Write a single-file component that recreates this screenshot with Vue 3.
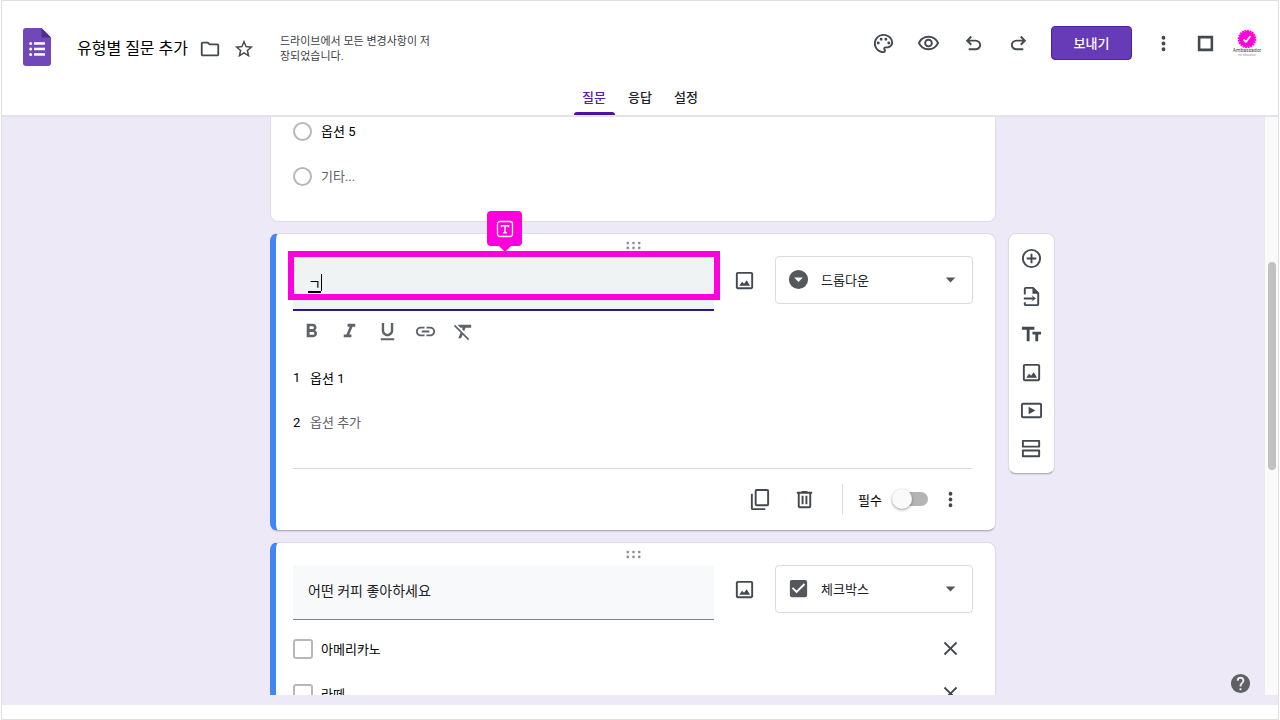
<template>
  <div class="page">
    <div class="app">
      <header class="header">
        <div class="header-top">
          <div class="doc-info">
            <a href="#" class="logo" aria-label="Forms">
              <svg width="28" height="38" viewBox="0 0 28 38">
                <path d="M3 0h15.500l9.500 9.500V35a3 3 0 0 1-3 3H3a3 3 0 0 1-3-3V3a3 3 0 0 1 3-3z" fill="#7248b9" />
                <path d="M18.500 0L28 9.500h-9.500z" fill="#4e2f86" />
                <g fill="#fff">
                  <circle cx="7.700" cy="15.500" r="1.500" />
                  <circle cx="7.700" cy="21" r="1.500" />
                  <circle cx="7.700" cy="26.500" r="1.500" />
                  <rect x="11" y="14.200" width="11" height="2.500" />
                  <rect x="11" y="19.700" width="11" height="2.500" />
                  <rect x="11" y="25.200" width="11" height="2.500" />
                </g>
              </svg>
            </a>
            <h1 class="doc-title">유형별 질문 추가</h1>
            <button class="icon-btn doc-btn" aria-label="폴더"><Icon name="folder" /></button>
            <button class="icon-btn doc-btn" aria-label="별표"><Icon name="star" /></button>
            <p class="save-status">드라이브에서 모든 변경사항이 저장되었습니다.</p>
          </div>

          <div class="header-actions">
            <button v-for="a in headerActions" :key="a.icon" class="icon-btn action" :aria-label="a.label">
              <Icon :name="a.icon" />
            </button>
            <button class="send-btn">보내기</button>
            <button class="icon-btn narrow" aria-label="더보기"><Icon name="more" /></button>
            <button class="icon-btn narrow" aria-label="앱"><Icon name="square" /></button>
            <button class="icon-btn narrow" aria-label="계정">
              <svg width="30" height="30" viewBox="0 0 30 30">
                <circle cx="15" cy="11" r="8" fill="#ff00dc" />
                <circle cx="15" cy="11" r="8.300" fill="none" stroke="#ff00dc" stroke-width="2" stroke-dasharray="1.800 0.800" />
                <path d="M11.500 11.500l2.500 2.500 4.500-6" fill="none" stroke="#fff" stroke-width="1.800" />
                <text x="15" y="23.500" class="avatar-name">Ambassador</text>
                <text x="15" y="27.500" class="avatar-sub">for education</text>
              </svg>
            </button>
          </div>
        </div>

        <nav class="tabs">
          <a
            v-for="tab in tabs"
            :key="tab"
            href="#"
            class="tab"
            :class="{ active: tab === activeTab }"
            @click.prevent="activeTab = tab"
          >{{ tab }}</a>
        </nav>
      </header>

      <div class="body">
        <main class="canvas">
          <!-- Previous question -->
          <section class="card card-prev">
            <label class="choice">
              <input type="radio" class="radio" disabled />
              <span>옵션 5</span>
            </label>
            <label class="choice muted">
              <input type="radio" class="radio" disabled />
              <span>기타...</span>
            </label>
          </section>

          <!-- Question being edited -->
          <section class="card selected card-active">
            <div class="handle"><Icon name="drag" /></div>
            <div class="question-row">
              <div class="question-field focused">
                <input v-model="question" type="text" class="question-input" aria-label="질문" />
                <span class="caret"></span>
                <div class="highlight">
                  <span class="highlight-tag">
                    <svg width="18" height="18" viewBox="0 0 18 18" fill="none" stroke="#fff">
                      <rect x="1.500" y="1.500" width="15" height="15" rx="2.500" stroke-width="1.300" />
                      <path d="M5.500 7.200V5.800h7v1.400M9 5.800v7M7.300 12.800h3.400" stroke-width="1.500" />
                    </svg>
                  </span>
                </div>
              </div>
              <button class="icon-btn image-btn" aria-label="이미지 추가"><Icon name="image" /></button>
              <div class="type-select">
                <Icon name="dropdown" class="type-icon" />
                <select aria-label="질문 유형">
                  <option>드롭다운</option>
                  <option>체크박스</option>
                </select>
                <Icon name="arrow" class="type-arrow" />
              </div>
            </div>

            <div class="format-bar">
              <button v-for="f in formats" :key="f.icon" class="icon-btn format-btn" :aria-label="f.label">
                <Icon :name="f.icon" />
              </button>
            </div>

            <ol class="options">
              <li class="option">
                <span class="option-index">1</span>
                <input type="text" class="option-input" value="옵션 1" aria-label="옵션 1" />
              </li>
              <li class="option">
                <span class="option-index">2</span>
                <input type="text" class="option-input" placeholder="옵션 추가" aria-label="옵션 추가" />
              </li>
            </ol>

            <footer class="card-footer">
              <button class="icon-btn footer-btn" aria-label="복사"><Icon name="copy" /></button>
              <button class="icon-btn footer-btn" aria-label="삭제"><Icon name="trash" /></button>
              <label class="required">
                <span>필수</span>
                <input v-model="required" type="checkbox" role="switch" class="switch" />
              </label>
              <button class="icon-btn footer-btn" aria-label="옵션 더보기"><Icon name="more" /></button>
            </footer>
          </section>

          <aside class="side-toolbar">
            <button v-for="t in tools" :key="t.icon" class="icon-btn tool" :aria-label="t.label">
              <Icon :name="t.icon" />
            </button>
          </aside>

          <!-- Next question -->
          <section class="card selected">
            <div class="handle"><Icon name="drag" /></div>
            <div class="question-row">
              <div class="question-field">
                <input type="text" class="question-input" value="어떤 커피 좋아하세요" aria-label="질문" />
              </div>
              <button class="icon-btn image-btn" aria-label="이미지 추가"><Icon name="image" /></button>
              <div class="type-select">
                <Icon name="checkbox" class="type-icon" />
                <select aria-label="질문 유형">
                  <option>체크박스</option>
                  <option>드롭다운</option>
                </select>
                <Icon name="arrow" class="type-arrow" />
              </div>
            </div>
            <ul class="options checks">
              <li v-for="drink in drinks" :key="drink" class="option">
                <input type="checkbox" class="check" :aria-label="drink" />
                <input type="text" class="option-input" :value="drink" :aria-label="drink" />
                <button class="icon-btn footer-btn" aria-label="삭제"><Icon name="close" /></button>
              </li>
            </ul>
          </section>
        </main>

        <div class="scrollbar"><div class="thumb"></div></div>
        <button class="help" aria-label="도움말"><Icon name="help" /></button>
      </div>
    </div>
  </div>
</template>

<script setup>
import { h, ref } from 'vue'

const paths = {
  folder: 'M9.170 6l2 2H20v10H4V6h5.170M10 4H4c-1.100 0-2 .9-2 2v12c0 1.100.9 2 2 2h16c1.100 0 2-.9 2-2V8c0-1.100-.9-2-2-2h-8l-2-2z',
  star: 'M22 9.240l-7.190-.62L12 2 9.190 8.630 2 9.240l5.460 4.730L5.820 21 12 17.270 18.180 21l-1.630-7.030L22 9.240zM12 15.400l-3.760 2.270 1-4.280-3.320-2.880 4.380-.38L12 6.100l1.710 4.040 4.380.38-3.320 2.880 1 4.280L12 15.400z',
  palette: 'M12 22C6.490 22 2 17.510 2 12S6.490 2 12 2s10 4.040 10 9c0 3.310-2.690 6-6 6h-1.770c-.28 0-.5.22-.5.5 0 .12.05.23.13.33.41.47.64 1.060.64 1.670A2.500 2.500 0 0 1 12 22zm0-18c-4.410 0-8 3.590-8 8s3.590 8 8 8c.28 0 .5-.22.5-.5a.54.54 0 0 0-.14-.35c-.41-.46-.63-1.050-.63-1.650a2.500 2.500 0 0 1 2.500-2.500H16c2.210 0 4-1.790 4-4 0-3.860-3.590-7-8-7zM6.500 10a1.500 1.500 0 1 0 0 3 1.500 1.500 0 0 0 0-3zM9.500 6a1.500 1.500 0 1 0 0 3 1.500 1.500 0 0 0 0-3zM14.500 6a1.500 1.500 0 1 0 0 3 1.500 1.500 0 0 0 0-3zM17.500 10a1.500 1.500 0 1 0 0 3 1.500 1.500 0 0 0 0-3z',
  eye: 'M12 6a9.770 9.770 0 0 1 8.820 5.500 9.760 9.760 0 0 1-17.640 0A9.770 9.770 0 0 1 12 6m0-2C7 4 2.730 7.110 1 11.500 2.730 15.890 7 19 12 19s9.270-3.110 11-7.500C21.270 7.110 17 4 12 4zm0 5a2.500 2.500 0 0 1 0 5 2.500 2.500 0 0 1 0-5m0-2a4.500 4.500 0 1 0 0 9 4.500 4.500 0 0 0 0-9z',
  undo: 'M7 19v-2h7.100q1.570 0 2.740-1Q18 15 18 13.500T16.840 11Q15.670 10 14.100 10H7.800l2.600 2.600L9 14 4 9l5-5 1.400 1.400L7.800 8h6.300q2.420 0 4.160 1.570Q20 11.150 20 13.500q0 2.350-1.740 3.920Q16.520 19 14.100 19z',
  redo: 'M17 19v-2H9.900q-1.570 0-2.740-1Q6 15 6 13.500T7.160 11Q8.330 10 9.900 10h6.300l-2.600 2.600L15 14l5-5-5-5-1.400 1.400L16.200 8H9.900q-2.420 0-4.160 1.570Q4 11.150 4 13.500q0 2.350 1.740 3.920Q7.480 19 9.900 19z',
  more: 'M12 8a2 2 0 1 0 0-4 2 2 0 0 0 0 4zm0 2a2 2 0 1 0 0 4 2 2 0 0 0 0-4zm0 6a2 2 0 1 0 0 4 2 2 0 0 0 0-4z',
  square: 'M4 4h16v16H4zM6.700 6.700v10.600h10.600V6.700z',
  drag: 'M6 8.100a1.400 1.400 0 1 0 0 2.800 1.400 1.400 0 0 0 0-2.800zM12 8.100a1.400 1.400 0 1 0 0 2.800 1.400 1.400 0 0 0 0-2.800zM18 8.100a1.400 1.400 0 1 0 0 2.800 1.400 1.400 0 0 0 0-2.800zM6 13.100a1.400 1.400 0 1 0 0 2.800 1.400 1.400 0 0 0 0-2.800zM12 13.100a1.400 1.400 0 1 0 0 2.800 1.400 1.400 0 0 0 0-2.800zM18 13.100a1.400 1.400 0 1 0 0 2.800 1.400 1.400 0 0 0 0-2.800z',
  image: 'M19 5v14H5V5h14m0-2H5c-1.100 0-2 .9-2 2v14c0 1.100.9 2 2 2h14c1.100 0 2-.9 2-2V5c0-1.100-.9-2-2-2zM6.500 17.500l3-4.300 2 2.300 2.800-3.700 3.500 5.700z',
  dropdown: 'M12 2a10 10 0 1 0 0 20 10 10 0 0 0 0-20zm0 12.500l-4.500-4.500h9z',
  checkbox: 'M19 3H5a2 2 0 0 0-2 2v14c0 1.100.9 2 2 2h14a2 2 0 0 0 2-2V5a2 2 0 0 0-2-2zm-9 14l-5-5 1.410-1.410L10 14.170l7.590-7.590L19 8l-9 9z',
  arrow: 'M7 10l5 5 5-5z',
  bold: 'M15.600 10.790c.97-.67 1.650-1.770 1.650-2.790 0-2.260-1.750-4-4-4H7v14h7.040c2.090 0 3.710-1.700 3.710-3.790 0-1.520-.86-2.820-2.150-3.420zM10 6.500h3c.83 0 1.500.67 1.500 1.500s-.67 1.500-1.500 1.500h-3v-3zm3.500 9H10v-3h3.500c.83 0 1.500.67 1.500 1.500s-.67 1.500-1.500 1.500z',
  italic: 'M10 4v3h2.210l-3.420 8H6v3h8v-3h-2.210l3.420-8H18V4z',
  underline: 'M12 17c3.310 0 6-2.690 6-6V3h-2.500v8c0 1.930-1.570 3.500-3.500 3.500S8.500 12.930 8.500 11V3H6v8c0 3.310 2.690 6 6 6zm-7 2v2h14v-2H5z',
  link: 'M3.900 12c0-1.710 1.390-3.100 3.100-3.100h4V7H7c-2.760 0-5 2.240-5 5s2.240 5 5 5h4v-1.900H7c-1.710 0-3.100-1.390-3.100-3.100zM8 13h8v-2H8v2zm9-6h-4v1.900h4c1.710 0 3.100 1.390 3.100 3.100s-1.390 3.100-3.100 3.100h-4V17h4c2.760 0 5-2.240 5-5s-2.240-5-5-5z',
  clear: 'M3.270 5L2 6.270l6.970 6.970L6.500 19h3l1.570-3.660L16.730 21 18 19.730 3.550 5.270 3.270 5zM6 5v.18L8.820 8h2.400l-.72 1.680 2.100 2.100L14.210 8H20V5H6z',
  copy: 'M20 1H9a2 2 0 0 0-2 2v14c0 1.100.9 2 2 2h11a2 2 0 0 0 2-2V3a2 2 0 0 0-2-2zm0 16H9V3h11v14zM3 6h2v15h13v2H5a2 2 0 0 1-2-2V6z',
  trash: 'M9 3v1H4v2h1v13c0 1.100.9 2 2 2h10a2 2 0 0 0 2-2V6h1V4h-5V3H9zM7 6h10v13H7V6zm2 2v9h2V8H9zm4 0v9h2V8h-2z',
  add: 'M13 7h-2v4H7v2h4v4h2v-4h4v-2h-4V7zm-1-5a10 10 0 1 0 0 20 10 10 0 0 0 0-20zm0 18a8 8 0 1 1 0-16 8 8 0 0 1 0 16z',
  importFile: 'M14 2H6a2 2 0 0 0-2 2v6h2V4h7v5h5v11H6v-2H4v2c0 1.100.9 2 2 2h12a2 2 0 0 0 2-2V8l-6-6zM12 10.500l1.500 2.500H4v2h9.500L12 17.500l4.500-3.500z',
  text: 'M2 4v3h5v12h3V7h5V4H2zm20 5h-9v3h3v7h3v-7h3V9z',
  video: 'M21 4H3a2 2 0 0 0-2 2v12c0 1.100.9 2 2 2h18a2 2 0 0 0 2-2V6a2 2 0 0 0-2-2zm0 14H3V6h18v12zM9 8l7 4-7 4z',
  section: 'M20 3H3a1 1 0 0 0-1 1v6a1 1 0 0 0 1 1h17a1 1 0 0 0 1-1V4a1 1 0 0 0-1-1zm-1 6H4V5h15v4zM20 13H3a1 1 0 0 0-1 1v6a1 1 0 0 0 1 1h17a1 1 0 0 0 1-1v-6a1 1 0 0 0-1-1zm-1 6H4v-4h15v4z',
  close: 'M19 6.410L17.590 5 12 10.590 6.410 5 5 6.410 10.590 12 5 17.590 6.410 19 12 13.410 17.590 19 19 17.590 13.410 12z',
  help: 'M12 2a10 10 0 1 0 0 20 10 10 0 0 0 0-20zm1 17h-2v-2h2v2zm2.070-7.750l-.9.92C13.450 12.900 13 13.500 13 15h-2v-.5c0-1.100.45-2.100 1.170-2.830l1.240-1.260c.37-.36.59-.86.59-1.410a2 2 0 1 0-4 0H8a4 4 0 1 1 8 0c0 .88-.36 1.680-.93 2.250z'
}

const Icon = (props) =>
  h('svg', { class: 'icon', viewBox: '0 0 24 24', 'aria-hidden': 'true' }, [
    h('path', { d: paths[props.name], 'fill-rule': 'evenodd' })
  ])
Icon.props = ['name']

const tabs = ['질문', '응답', '설정']
const activeTab = ref('질문')
const question = ref('ㄱ')
const required = ref(false)
const drinks = ['아메리카노', '라떼']

const headerActions = [
  { icon: 'palette', label: '테마 맞춤설정' },
  { icon: 'eye', label: '미리보기' },
  { icon: 'undo', label: '실행취소' },
  { icon: 'redo', label: '재실행' }
]

const formats = [
  { icon: 'bold', label: '굵게' },
  { icon: 'italic', label: '기울임꼴' },
  { icon: 'underline', label: '밑줄' },
  { icon: 'link', label: '링크 삽입' },
  { icon: 'clear', label: '서식 삭제' }
]

const tools = [
  { icon: 'add', label: '질문 추가' },
  { icon: 'importFile', label: '질문 가져오기' },
  { icon: 'text', label: '제목 및 설명 추가' },
  { icon: 'image', label: '이미지 추가' },
  { icon: 'video', label: '동영상 추가' },
  { icon: 'section', label: '섹션 추가' }
]
</script>

<style>
body {
  margin: 0;
  background: #fff;
}
</style>

<style scoped>
* {
  box-sizing: border-box;
}

.page {
  height: 100vh;
  padding: 0 1px;
  font-family: Roboto, "Noto Sans CJK KR", sans-serif;
  font-size: 13px;
  color: #202124;
}

.app {
  display: flex;
  flex-direction: column;
  height: 100%;
  padding-bottom: 14px;
  border: 1px solid #e0e0e0;
}

button,
input,
select {
  font: inherit;
  color: inherit;
}

.icon {
  display: block;
  width: 23px;
  height: 23px;
  fill: currentColor;
}

.icon-btn {
  display: flex;
  align-items: center;
  justify-content: center;
  flex-shrink: 0;
  padding: 0;
  border: none;
  background: none;
  color: #444950;
  cursor: pointer;
}

/* Header */
.header {
  display: flex;
  flex-direction: column;
  flex-shrink: 0;
  height: 116px;
  border-bottom: 2px solid #e4e4e8;
}

.header-top {
  display: flex;
  align-items: flex-start;
  justify-content: space-between;
  flex: 1;
  padding: 24px 10px 0 21px;
}

.doc-info {
  display: flex;
  align-items: center;
  height: 48px;
}

.logo {
  display: block;
  align-self: flex-start;
  height: 38px;
  margin: 3px 26px 0 0;
}

.doc-title {
  margin: 0 5px 0 0;
  font-size: 16px;
  font-weight: 400;
  line-height: 24px;
  color: #000;
}

.doc-btn {
  width: 34px;
  height: 34px;
}

.doc-btn .icon {
  width: 22px;
  height: 22px;
}

.save-status {
  width: 154px;
  margin: 0 0 0 19px;
  font-size: 11px;
  line-height: 15px;
  word-break: break-all;
  color: #3c4043;
}

.header-actions {
  display: flex;
  align-items: center;
  height: 36px;
}

.action {
  width: 45px;
  height: 36px;
}

.send-btn {
  width: 81px;
  height: 34px;
  margin: 0 10px;
  padding: 0 0 2px;
  border: 1px solid #4f1f9f;
  border-radius: 4px;
  background: #673ab7;
  color: #fff;
  font-weight: 500;
  cursor: pointer;
}

.narrow {
  width: 42px;
  height: 36px;
}

.avatar-name {
  font-size: 5px;
  text-anchor: middle;
  fill: #444;
}

.avatar-sub {
  font-size: 3px;
  text-anchor: middle;
  fill: #999;
}

.tabs {
  display: flex;
  justify-content: center;
  gap: 5px;
}

.tab {
  position: relative;
  width: 41px;
  height: 34px;
  font-weight: 500;
  line-height: 33px;
  text-align: center;
  text-decoration: none;
  color: #202124;
}

.tab.active {
  color: #5420ad;
}

.tab.active::after {
  content: "";
  position: absolute;
  left: 0;
  right: 0;
  bottom: 0;
  height: 3px;
  border-radius: 3px 3px 0 0;
  background: #4a14a0;
}

/* Body */
.body {
  position: relative;
  display: flex;
  flex: 1;
  min-height: 0;
  padding-bottom: 10px;
  background: #eee9f7;
}

.canvas {
  display: grid;
  flex: 1;
  grid-template-columns: 1fr minmax(0, 726px) 1fr;
  align-content: start;
  row-gap: 11px;
  overflow: hidden;
}

.card {
  grid-column: 2;
  padding: 0 22px;
  border: 1px solid #dedbe6;
  border-radius: 8px;
  background: #fff;
}

.card-prev {
  display: flex;
  flex-direction: column;
  gap: 17px;
  padding-bottom: 31px;
  border-top: none;
  border-radius: 0 0 8px 8px;
}

.selected {
  padding-left: 17px;
  border-left: 6px solid #4285f4;
}

.card-active {
  padding-bottom: 1px;
  border-bottom-color: #b3b0bb;
  box-shadow: 0 1px 1px rgba(0, 0, 0, 0.1);
}

.choice {
  display: flex;
  align-items: center;
  gap: 9px;
  height: 28px;
  color: #000;
}

.choice span {
  padding-bottom: 2px;
}

.muted {
  color: #5f6368;
}

.radio {
  appearance: none;
  width: 19px;
  height: 19px;
  margin: 0;
  border: 2px solid #b8b8b8;
  border-radius: 50%;
}

.handle {
  display: flex;
  align-items: center;
  justify-content: center;
  height: 22px;
  color: #8a8d91;
}

.question-row {
  display: flex;
  align-items: flex-start;
}

.question-field {
  position: relative;
  display: flex;
  flex: 1;
  height: 55px;
  border-bottom: 1px solid #80838a;
  background: #f8f9fa;
}

.question-field.focused {
  border-bottom: 2px solid #2a1590;
  background: #f0f3f4;
}

.question-input {
  flex: 1;
  min-width: 0;
  padding: 0 15px 4px;
  border: none;
  outline: none;
  background: none;
  font-size: 14px;
}

.focused .question-input {
  padding-bottom: 0;
  color: #000;
  text-decoration: underline 2px;
  text-underline-offset: 2px;
}

.caret {
  position: absolute;
  top: 18px;
  left: 28px;
  width: 1px;
  height: 17px;
  background: #000;
}

.highlight {
  position: absolute;
  top: -5px;
  left: -5px;
  right: -6px;
  height: 49px;
  border: 6px solid #ff00dc;
  pointer-events: none;
}

.highlight-tag {
  position: absolute;
  bottom: 48px;
  left: 50%;
  display: flex;
  align-items: center;
  justify-content: center;
  width: 35px;
  height: 35px;
  margin-left: -17px;
  border-radius: 4px;
  background: #ff00dc;
}

.highlight-tag::after {
  content: "";
  position: absolute;
  top: 100%;
  border: 6px solid transparent;
  border-top-color: #ff00dc;
  border-bottom: none;
}

.image-btn {
  width: 61px;
  height: 48px;
}

.type-select {
  position: relative;
  width: 198px;
  height: 48px;
  color: #54575c;
}

.type-select select {
  appearance: none;
  width: 100%;
  height: 100%;
  padding: 0 40px 0 45px;
  border: 1px solid #dadce0;
  border-radius: 4px;
  background: #fff;
  color: #202124;
}

.type-icon,
.type-arrow {
  position: absolute;
  top: 12px;
  pointer-events: none;
}

.type-icon {
  left: 12px;
}

.type-arrow {
  right: 11px;
}

.format-bar {
  display: flex;
  gap: 14px;
  height: 40px;
  margin-bottom: 4px;
  padding-left: 6px;
}

.format-btn {
  width: 24px;
  color: #5f6368;
}

.options {
  margin: 0;
  padding: 0;
  list-style: none;
}

.option {
  display: flex;
  align-items: center;
  height: 45px;
}

.option-index {
  width: 17px;
  color: #000;
}

.option-input {
  flex: 1;
  min-width: 0;
  padding: 0 0 1px;
  border: none;
  outline: none;
  background: none;
  color: #000;
}

.option-input::placeholder {
  color: #5f6368;
  opacity: 1;
}

.checks {
  padding-top: 6px;
}

.check {
  appearance: none;
  width: 20px;
  height: 20px;
  margin: 0 8px 0 0;
  border: 2px solid #b8b8b8;
  border-radius: 3px;
}

.card-footer {
  display: flex;
  align-items: center;
  justify-content: flex-end;
  height: 61px;
  margin-top: 23px;
  border-top: 1px solid #dadce0;
}

.footer-btn {
  width: 45px;
  height: 44px;
}

.required {
  display: flex;
  align-items: center;
  gap: 10px;
  height: 30px;
  margin-left: 15px;
  padding-left: 15px;
  border-left: 1px solid #dadce0;
  color: #000;
}

.switch {
  appearance: none;
  position: relative;
  width: 36px;
  height: 20px;
  margin: 0;
}

.switch::before {
  content: "";
  position: absolute;
  top: 3px;
  left: 4px;
  right: 0;
  height: 14px;
  border-radius: 7px;
  background: #b4b4b4;
}

.switch::after {
  content: "";
  position: absolute;
  top: 0;
  left: 0;
  width: 20px;
  height: 20px;
  border-radius: 50%;
  background: #fafafa;
  box-shadow: 0 1px 3px rgba(0, 0, 0, 0.4);
}

.switch:checked::after {
  left: 16px;
}

/* Side toolbar */
.side-toolbar {
  grid-column: 3;
  grid-row: 2;
  align-self: start;
  width: 47px;
  margin-left: 12px;
  padding: 5px 0 6px;
  border: 1px solid #dedbe6;
  border-bottom-color: #b3b0bb;
  border-radius: 8px;
  background: #fff;
  box-shadow: 0 1px 1px rgba(0, 0, 0, 0.1);
}

.tool {
  width: 100%;
  height: 38px;
}

.scrollbar {
  position: relative;
  width: 14px;
  border-left: 1px solid #ebebeb;
  background: #fafafa;
}

.thumb {
  position: absolute;
  top: 25%;
  left: 3px;
  width: 8px;
  height: 36%;
  border-radius: 4px;
  background: #c1c1c1;
}

.help {
  position: absolute;
  right: 26px;
  bottom: 10px;
  padding: 0;
  border: none;
  background: none;
  color: #5f6062;
  cursor: pointer;
}
</style>
